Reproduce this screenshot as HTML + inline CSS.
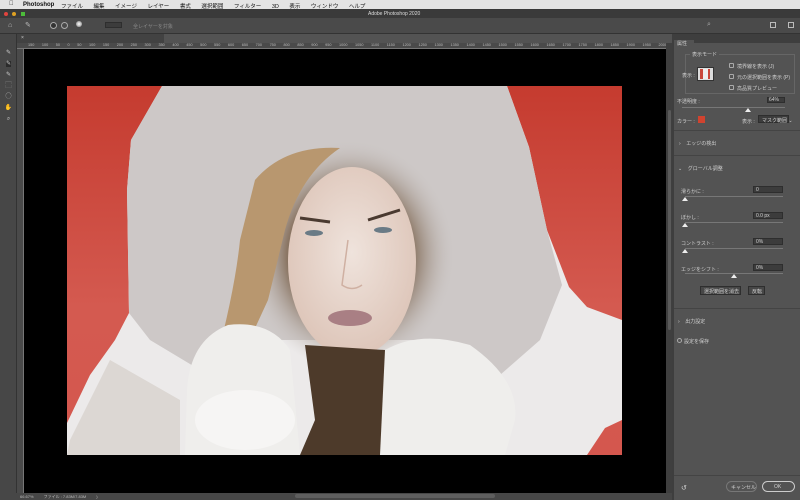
<!DOCTYPE html>
<html><head><meta charset="utf-8"><style>
*{margin:0;padding:0;box-sizing:border-box}
body{width:800px;height:500px;overflow:hidden;background:#535353;font-family:"Liberation Sans","Noto Sans CJK JP",sans-serif;position:relative;color:#ccc}
.a{position:absolute}
.t{font-size:5px;color:#d0d0d0;white-space:nowrap}
.box{background:#3c3c3c;border:1px solid #2e2e2e}
.cb{width:5px;height:5px;border:1px solid #aaa;border-radius:1px}
.sl{height:1px;background:#777}
.th{width:0;height:0;border-left:3px solid transparent;border-right:3px solid transparent;border-bottom:4px solid #eee}
</style></head><body>
<div class="a" style="left:0;top:0;width:800px;height:9px;background:#e4e4e4"></div>
<div class="a" style="left:9px;top:1px;font-size:6px;color:#111">&#63743;</div>
<div class="a" style="left:23px;top:1.5px;font-size:6px;color:#111;font-weight:bold">Photoshop</div>
<div class="a" style="left:61px;top:1.5px;font-size:5.5px;color:#111;word-spacing:9px;white-space:nowrap">ファイル 編集 イメージ レイヤー 書式 選択範囲 フィルター 3D 表示 ウィンドウ ヘルプ</div>
<div class="a" style="left:0;top:9px;width:800px;height:9px;background:#3a3a3a"></div>
<div class="a" style="left:4px;top:12px;width:4px;height:4px;border-radius:50%;background:#e0443e"></div>
<div class="a" style="left:12px;top:12px;width:4px;height:4px;border-radius:50%;background:#dea123"></div>
<div class="a" style="left:21px;top:12px;width:4px;height:4px;background:#4cbb3a"></div>
<div class="a t" style="left:368px;top:11px;color:#ddd">Adobe Photoshop 2020</div>
<div class="a" style="left:0;top:18px;width:800px;height:16px;background:#4a4a4a;border-bottom:1px solid #333"></div>
<div class="a" style="left:8px;top:22px;font-size:7px;color:#bbb">⌂</div>
<div class="a" style="left:25px;top:21px;font-size:7px;color:#bbb">✎</div>
<div class="a" style="left:50px;top:22px;width:7px;height:7px;border:1px solid #aaa;border-radius:50%;background:#333"></div>
<div class="a" style="left:61px;top:22px;width:7px;height:7px;border:1px solid #aaa;border-radius:50%"></div>
<div class="a" style="left:76px;top:21px;width:6px;height:6px;border-radius:50%;background:radial-gradient(#fff,#777)"></div>
<div class="a box" style="left:105px;top:22px;width:17px;height:6px"></div>
<div class="a t" style="left:133px;top:23px;color:#888">全レイヤーを対象</div>
<div class="a" style="left:707px;top:21px;font-size:7px;color:#aaa">⌕</div>
<div class="a" style="left:770px;top:22px;width:6px;height:6px;border:1px solid #bbb"></div>
<div class="a" style="left:788px;top:22px;width:6px;height:6px;border:1px solid #bbb"></div>
<div class="a" style="left:0;top:34px;width:17px;height:466px;background:#474747;border-right:1px solid #333"></div>
<div class="a" style="left:4px;top:48px;font-size:6px;line-height:11px;color:#ccc;width:9px;text-align:center">✎<br><span style="background:#2b2b2b">✎</span><br>✎<br>⬚<br>◯<br>✋<br>⌕</div>
<div class="a" style="left:17px;top:34px;width:147px;height:9px;background:#424242"></div>
<div class="a t" style="left:21px;top:35px">×</div>
<div class="a" style="left:17px;top:43px;width:649px;height:6px;background:#4a4a4a;border-bottom:1px solid #777"></div>
<div class="a" style="left:28px;top:43px;font-size:3.8px;color:#bbb;word-spacing:6.5px;white-space:nowrap">150 100 50 0 50 100 150 200 250 300 350 400 450 500 550 600 650 700 750 800 850 900 950 1000 1050 1100 1150 1200 1250 1300 1350 1400 1450 1500 1550 1600 1650 1700 1750 1800 1850 1900 1950 2000 2050 2100</div>
<div class="a" style="left:17px;top:49px;width:7px;height:444px;background:#4a4a4a;border-right:1px solid #777"></div>
<div class="a" style="left:24px;top:49px;width:642px;height:444px;background:#000"></div>
<svg class="a" style="left:67px;top:86px" width="555" height="369" viewBox="67 86 555 369">
<defs>
<linearGradient id="rg" x1="0" x2="0" y1="0" y2="1"><stop offset="0" stop-color="#c53b2f"/><stop offset="0.6" stop-color="#d45a50"/><stop offset="1" stop-color="#d4574e"/></linearGradient>
<radialGradient id="fg" cx="0.5" cy="0.45" r="0.6"><stop offset="0" stop-color="#efe3dc"/><stop offset="1" stop-color="#dcc3b6"/></radialGradient>
<radialGradient id="sh" cx="0.5" cy="0.5" r="0.5"><stop offset="0.6" stop-color="#8a7563"/><stop offset="1" stop-color="#cbc6c4" stop-opacity="0"/></radialGradient>
</defs>
<rect x="67" y="86" width="555" height="369" fill="url(#rg)"/>
<path d="M162 86 L507 86 L529 147 L547 230 L569 287 L587 307 L622 320 L622 420 L605 428 L587 455 L67 455 L67 423 L90 375 L115 340 L129 313 L127 190 L131 140 Z" fill="#eceaea"/>
<path d="M162 86 L507 86 L529 147 L547 230 L562 285 L540 340 L500 375 L420 340 L280 340 L200 370 L150 340 L129 313 L127 190 L131 140 Z" fill="#cdc8c7"/>
<ellipse cx="350" cy="255" rx="105" ry="115" fill="url(#sh)"/>
<path d="M255 180 Q285 145 340 148 Q300 175 285 230 L268 300 L245 350 L215 365 Q235 290 240 240 Z" fill="#b8976f"/>
<ellipse cx="352" cy="262" rx="64" ry="95" fill="url(#fg)"/>
<path d="M300 218 L330 222 M368 220 L400 210" stroke="#4a3a30" stroke-width="3"/>
<ellipse cx="314" cy="233" rx="9" ry="3" fill="#6a7b86"/>
<ellipse cx="383" cy="230" rx="9" ry="3" fill="#6a7b86"/>
<path d="M348 240 L342 285 Q352 292 362 285" stroke="#cfb0a2" fill="none" stroke-width="1.5"/>
<ellipse cx="350" cy="318" rx="22" ry="8" fill="#a97f84"/>
<path d="M305 345 L315 420 L300 455 L390 455 L385 350 Z" fill="#4d3a2a"/>
<path d="M290 350 Q270 320 228 325 Q190 340 187 390 L185 455 L300 455 Z" fill="#efeeec"/>
<path d="M385 350 Q420 330 470 345 Q520 380 515 420 L505 455 L380 455 Z" fill="#efeeec"/>
<ellipse cx="245" cy="420" rx="50" ry="30" fill="#f6f5f4"/>
<path d="M70 440 L110 360 L180 400 L180 455 L67 455 Z" fill="#dcd7d3"/>
</svg>
<div class="a" style="left:666px;top:43px;width:6px;height:457px;background:#3f3f3f"></div>
<div class="a" style="left:668px;top:110px;width:3px;height:220px;background:#5a5a5a;border-radius:2px"></div>
<div class="a" style="left:0;top:493px;width:672px;height:7px;background:#474747"></div>
<div class="a" style="left:295px;top:494px;width:200px;height:4px;background:#5e5e5e;border-radius:2px"></div>
<div class="a" style="left:20px;top:494px;font-size:4px;color:#bbb;white-space:nowrap">66.67% &nbsp; &nbsp; &nbsp; &nbsp; ファイル : 7.83M/7.83M &nbsp; &nbsp; &nbsp; &nbsp; )</div>
<div class="a" style="left:672px;top:34px;width:128px;height:466px;background:#3e3e3e"></div>
<div class="a" style="left:674px;top:43px;width:126px;height:457px;background:#535353"></div>
<div class="a" style="left:674px;top:40px;width:20px;height:7px;background:#535353"></div>
<div class="a t" style="left:677px;top:40px">属性</div>
<div class="a" style="left:685px;top:54px;width:110px;height:40px;border:1px solid #666"></div>
<div class="a t" style="left:690px;top:51px;background:#535353;padding:0 2px">表示モード</div>
<div class="a t" style="left:682px;top:72px">表示 :</div>
<div class="a" style="left:697px;top:67px;width:17px;height:14px;background:#ddd;border:1px solid #333"></div>
<div class="a" style="left:700px;top:69px;width:10px;height:10px;background:#c9473b"></div>
<div class="a" style="left:703px;top:69px;width:5px;height:10px;background:#eee"></div>
<div class="a cb" style="left:729px;top:63px"></div><div class="a t" style="left:737px;top:63px">境界線を表示 (J)</div>
<div class="a cb" style="left:729px;top:74px"></div><div class="a t" style="left:737px;top:74px">元の選択範囲を表示 (P)</div>
<div class="a cb" style="left:729px;top:85px"></div><div class="a t" style="left:737px;top:85px">高品質プレビュー</div>
<div class="a t" style="left:677px;top:98px">不透明度 :</div>
<div class="a box" style="left:767px;top:97px;width:18px;height:6px"></div><div class="a t" style="left:769px;top:97px">64%</div>
<div class="a sl" style="left:682px;top:107px;width:103px"></div>
<div class="a th" style="left:745px;top:108px"></div>
<div class="a t" style="left:677px;top:118px">カラー :</div>
<div class="a" style="left:698px;top:116px;width:7px;height:7px;background:#d0432f"></div>
<div class="a t" style="left:742px;top:118px">表示 :</div>
<div class="a box" style="left:758px;top:115px;width:31px;height:8px"></div><div class="a t" style="left:762px;top:117px">マスク範囲 ⌄</div>
<div class="a" style="left:674px;top:130px;width:126px;height:1px;background:#444"></div>
<div class="a t" style="left:679px;top:140px">›&nbsp;&nbsp;&nbsp; エッジの検出</div>
<div class="a" style="left:674px;top:155px;width:126px;height:1px;background:#444"></div>
<div class="a t" style="left:678px;top:165px">⌄&nbsp;&nbsp;&nbsp; グローバル調整</div>
<div class="a t" style="left:681px;top:188px">滑らかに :</div>
<div class="a box" style="left:753px;top:186px;width:30px;height:7px"></div><div class="a t" style="left:756px;top:187px">0</div>
<div class="a sl" style="left:685px;top:196px;width:98px"></div><div class="a th" style="left:682px;top:197px"></div>
<div class="a t" style="left:681px;top:214px">ぼかし :</div>
<div class="a box" style="left:753px;top:212px;width:30px;height:7px"></div><div class="a t" style="left:756px;top:213px">0.0 px</div>
<div class="a sl" style="left:685px;top:222px;width:98px"></div><div class="a th" style="left:682px;top:223px"></div>
<div class="a t" style="left:681px;top:240px">コントラスト :</div>
<div class="a box" style="left:753px;top:238px;width:30px;height:7px"></div><div class="a t" style="left:756px;top:239px">0%</div>
<div class="a sl" style="left:685px;top:248px;width:98px"></div><div class="a th" style="left:682px;top:249px"></div>
<div class="a t" style="left:681px;top:266px">エッジをシフト :</div>
<div class="a box" style="left:753px;top:264px;width:30px;height:7px"></div><div class="a t" style="left:756px;top:265px">0%</div>
<div class="a sl" style="left:685px;top:273px;width:98px"></div><div class="a th" style="left:731px;top:274px"></div>
<div class="a box" style="left:700px;top:286px;width:41px;height:9px;background:#474747"></div><div class="a t" style="left:704px;top:288px">選択範囲を消去</div>
<div class="a box" style="left:748px;top:286px;width:17px;height:9px;background:#474747"></div><div class="a t" style="left:752px;top:288px">反転</div>
<div class="a" style="left:674px;top:308px;width:126px;height:1px;background:#444"></div>
<div class="a t" style="left:678px;top:318px">›&nbsp;&nbsp;&nbsp; 出力設定</div>
<div class="a cb" style="left:677px;top:338px;border-radius:50%"></div><div class="a t" style="left:684px;top:338px">設定を保存</div>
<div class="a" style="left:674px;top:475px;width:126px;height:1px;background:#444"></div>
<div class="a t" style="left:681px;top:484px;font-size:7px">↺</div>
<div class="a" style="left:726px;top:481px;width:31px;height:11px;border:1px solid #777;border-radius:6px"></div><div class="a t" style="left:731px;top:484px">キャンセル</div>
<div class="a" style="left:762px;top:481px;width:33px;height:11px;border:1px solid #ccc;border-radius:6px"></div><div class="a t" style="left:774px;top:484px">OK</div>
</body></html>
